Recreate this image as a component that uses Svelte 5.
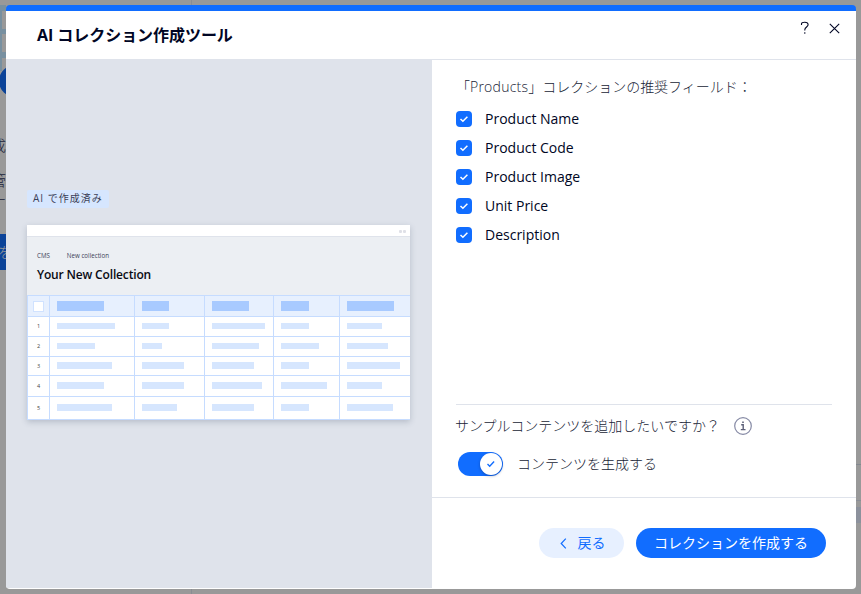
<script>
  let fields = $state([
    { label: 'Product Name', checked: true },
    { label: 'Product Code', checked: true },
    { label: 'Product Image', checked: true },
    { label: 'Unit Price', checked: true },
    { label: 'Description', checked: true }
  ]);
  let generate = $state(true);

  const headBars = [47, 27, 37, 28, 47];
  const rows = [
    [58, 27, 53, 28, 35],
    [38, 20, 47, 38, 41],
    [55, 42, 42, 28, 53],
    [47, 42, 50, 46, 35],
    [55, 35, 42, 28, 46]
  ];
</script>

<div class="page">
  <div class="behind" aria-hidden="true">
    <i class="tile"></i>
    <i class="dot"></i>
    <span class="frag f1">成</span>
    <span class="frag f2">管</span>
    <span class="frag f3">ナ</span>
    <span class="frag f4">を</span>
    <i class="rule top"></i>
    <i class="rule bottom"></i>
    <i class="edge"></i>
  </div>

  <section class="modal">
    <header class="modal-header">
      <h1>AI コレクション作成ツール</h1>
      <div class="actions">
        <button class="icon help" aria-label="ヘルプ">
          <svg width="10" height="14" viewBox="0 0 10 14">
            <path d="M1.5 4V2.8Q1.5 1.2 4.8 1.2T8.1 3.8C8.1 6 4.8 6 4.8 8.7V9.4" />
            <path d="M4.8 11.2v1.5" />
          </svg>
        </button>
        <button class="icon" aria-label="閉じる">
          <svg width="11" height="11" viewBox="0 0 11 11"><path d="M.8.8l9.4 9.4M10.2.8L.8 10.2" /></svg>
        </button>
      </div>
    </header>

    <div class="body">
      <aside class="preview">
        <span class="tag">AI で作成済み</span>
        <div class="card">
          <div class="chrome"><i></i><i></i></div>
          <div class="card-head">
            <p><span>CMS</span><span>New collection</span></p>
            <h2>Your New Collection</h2>
          </div>
          <div class="table">
            <div class="cell head first"><i class="box"></i></div>
            {#each headBars as width}
              <div class="cell head"><i style={`width: ${width}px`}></i></div>
            {/each}
            {#each rows as row, index}
              <div class="cell first">{index + 1}</div>
              {#each row as width}
                <div class="cell"><i style={`width: ${width}px`}></i></div>
              {/each}
            {/each}
          </div>
        </div>
      </aside>

      <div class="form">
        <div class="fields">
          <h3>「<span>Products</span>」コレクションの推奨フィールド：</h3>
          {#each fields as field}
            <label class="field">
              <input type="checkbox" bind:checked={field.checked} />
              <span class="check">
                {#if field.checked}
                  <svg width="16" height="16" viewBox="0 0 16 16"><path d="M4.5 8l2.4 2.3 4.5-4.6" /></svg>
                {/if}
              </span>
              <span class="name">{field.label}</span>
            </label>
          {/each}
        </div>

        <div class="sample">
          <p class="question">
            サンプルコンテンツを追加したいですか？
            <svg width="18" height="18" viewBox="0 0 18 18">
              <circle cx="9" cy="9" r="8.3" />
              <path d="M7.2 7.7h2v4.8M6.8 12.6h4.7" />
              <path class="fill" d="M8.2 4.4h1.6v1.6H8.2z" />
            </svg>
          </p>
          <label class="switch">
            <input type="checkbox" bind:checked={generate} />
            <span class="track" class:on={generate}>
              <span class="knob">
                <svg width="12" height="12" viewBox="0 0 12 12"><path d="M2.5 6l2.2 2.2 4.4-4.6" /></svg>
              </span>
            </span>
            コンテンツを生成する
          </label>
        </div>

        <footer>
          <button class="back">
            <svg width="7" height="11" viewBox="0 0 7 11"><path d="M5.8.7L1.2 5.5l4.6 4.8" /></svg>
            戻る
          </button>
          <button class="create">コレクションを作成する</button>
        </footer>
      </div>
    </div>
  </section>
</div>

<style>
  :global(body) {
    background: #999;
  }

  .page {
    position: relative;
    box-sizing: border-box;
    width: 861px;
    height: 594px;
    padding: 5px 5px 5px 6px;
    overflow: hidden;
    background: #999;
    color: #171c35;
    font-family: 'Open Sans', 'Noto Sans CJK JP', sans-serif;
    font-size: 14px;
  }

  h1, h2, h3, p {
    margin: 0;
  }

  button {
    padding: 0;
    border: 0;
    font: inherit;
    cursor: pointer;
  }

  svg {
    flex: none;
    fill: none;
    stroke: currentColor;
  }

  input {
    position: absolute;
    opacity: 0;
  }

  .behind > * {
    position: absolute;
  }

  .tile {
    top: 5px;
    left: 0;
    width: 6px;
    height: 66px;
    box-sizing: border-box;
    border-left: 2px solid #7890a0;
    background: linear-gradient(#7890a0 6px, #999 6px 24px, #7890a0 24px 29px, #999 29px 47px, #7890a0 47px 53px, #999 53px);
  }

  .dot {
    top: 65px;
    left: -1px;
    width: 32px;
    height: 32px;
    border-radius: 50%;
    background: #0b4399;
  }

  .frag {
    left: -9px;
    width: 15px;
    color: #20243b;
    font-size: 15px;
    font-weight: 300;
    line-height: 20px;
  }

  .f1 { top: 135px; }
  .f2 { top: 170px; }

  .f3 {
    top: 191px;
    left: -9px;
  }

  .f4 {
    top: 234px;
    left: -2px;
    height: 36px;
    background: #0b4399;
    color: #999;
    line-height: 36px;
  }

  .rule {
    left: 191px;
    width: 1px;
    height: 5px;
    background: #898d94;
  }

  .top { top: 0; }
  .bottom { top: 589px; }

  .edge {
    top: 464px;
    left: 856px;
    width: 5px;
    height: 59px;
    background: linear-gradient(#838890 1px, #999 1px 36px, #8a8e96 36px 37px, #999 37px 43px, #8c919c 43px);
  }

  .modal {
    position: relative;
    display: flex;
    flex-direction: column;
    box-sizing: border-box;
    height: 584px;
    border-top: 6px solid #116dff;
    border-radius: 4px;
    overflow: hidden;
    background: #fff;
  }

  .modal-header {
    display: flex;
    align-items: center;
    justify-content: space-between;
    box-sizing: border-box;
    height: 49px;
    padding: 0 16px 0 31px;
    border-bottom: 1px solid #dfe3eb;
    color: #000624;
  }

  h1 {
    font-size: 16px;
    font-weight: 700;
    letter-spacing: -0.05px;
    line-height: 24px;
  }

  .actions {
    display: flex;
    align-items: center;
    gap: 19px;
    margin-top: -13px;
  }

  .icon {
    display: flex;
    background: none;
    color: #000624;
  }

  .icon svg {
    stroke-width: 1.1;
  }

  .help {
    margin-top: -1px;
  }

  .body {
    display: grid;
    flex: 1;
    grid-template-columns: 426px 1fr;
    min-height: 0;
  }

  .preview {
    margin: -1px 0 1px;
    padding: 131px 22px 0 21px;
    background: #dfe3eb;
  }

  .tag {
    display: flex;
    align-items: center;
    box-sizing: border-box;
    width: 82px;
    height: 18px;
    margin-bottom: 17px;
    padding: 0 0 2px 6px;
    border-radius: 2px;
    background: #d6e6fe;
    color: #3b4057;
    font-size: 10px;
    letter-spacing: 1px;
    line-height: 14px;
    white-space: nowrap;
  }

  .card {
    width: 383px;
    background: #eceff3;
    box-shadow: 0 2px 6px rgba(50, 65, 90, 0.24);
  }

  .chrome {
    display: flex;
    align-items: center;
    justify-content: flex-end;
    gap: 1.5px;
    box-sizing: border-box;
    height: 12px;
    padding: 1px 4px 0 0;
    border-bottom: 1px solid #dfe3eb;
    background: #fff;
  }

  .chrome i {
    width: 3px;
    height: 3px;
    border-radius: 1px;
    background: #dfe0e7;
  }

  .card-head {
    box-sizing: border-box;
    height: 58px;
    padding: 14px 10px 0;
  }

  .card-head p {
    display: flex;
    gap: 17px;
    color: #3b4057;
    font-size: 6.2px;
    line-height: 9px;
  }

  h2 {
    margin-top: 6px;
    color: #080a12;
    font-size: 12px;
    font-weight: 600;
    letter-spacing: -0.16px;
    line-height: 17px;
    white-space: nowrap;
  }

  .table {
    display: grid;
    grid-template-columns: 22px 85px 70px 69px 66px 71px;
    grid-template-rows: 21px 20px 20px 19px 21px 23px;
    box-sizing: border-box;
    width: 383px;
    border-right: 1px solid #c6dcff;
    border-bottom: 1px solid #c6dcff;
  }

  .cell {
    display: flex;
    align-items: center;
    min-width: 0;
    padding: 0 0 1px 7px;
    border-top: 1px solid #c6dcff;
    border-left: 1px solid #c6dcff;
    background: #fff;
  }

  .cell i {
    height: 6.5px;
    background: #d6e6fe;
  }

  .head {
    padding-bottom: 0;
    background: #e7f0fe;
  }

  .head i {
    height: 10px;
    background: #a8caff;
  }

  .first {
    justify-content: center;
    padding-left: 0;
    color: #444;
    font-size: 5.5px;
  }

  .head .box {
    width: 9px;
    height: 9px;
    border: 1px solid #d0e2ff;
    background: #fff;
  }

  .form {
    display: flex;
    flex-direction: column;
  }

  .fields {
    box-sizing: border-box;
    height: 345px;
    margin: 0 24px;
    padding-top: 17px;
    border-bottom: 1px solid #dfe3eb;
  }

  h3 {
    font-size: 14px;
    font-weight: 300;
    letter-spacing: -0.02px;
    line-height: 20px;
    white-space: nowrap;
  }

  h3 span {
    letter-spacing: 0.25px;
  }

  .field {
    display: flex;
    align-items: center;
    gap: 13px;
    height: 20px;
    margin-top: 9px;
    color: #000624;
  }

  h3 + .field {
    margin-top: 12px;
  }

  .name {
    line-height: 18px;
  }

  .check {
    width: 16px;
    height: 16px;
    border-radius: 4px;
    background: #116dff;
    color: #fff;
  }

  .check svg {
    display: block;
    stroke-width: 1.5;
  }

  .sample {
    box-sizing: border-box;
    height: 93px;
    padding: 11px 24px 0 23px;
    border-bottom: 1px solid #dfe3eb;
    font-weight: 300;
  }

  .question {
    display: flex;
    align-items: center;
    gap: 14px;
    line-height: 20px;
  }

  .question svg {
    color: #868aa5;
    stroke-width: 1.2;
  }

  .question path {
    stroke: #5b5f77;
    stroke-width: 1.4;
  }

  .question .fill {
    fill: #5b5f77;
    stroke: none;
  }

  .switch {
    display: flex;
    align-items: center;
    gap: 14px;
    margin: 16px 0 0 3px;
    line-height: 24px;
  }

  .track {
    box-sizing: border-box;
    display: flex;
    width: 45px;
    height: 24px;
    padding: 1px;
    border-radius: 12px;
    background: #a8caff;
  }

  .track.on {
    justify-content: flex-end;
    background: #116dff;
  }

  .knob {
    display: grid;
    width: 22px;
    height: 22px;
    place-items: center;
    border-radius: 50%;
    background: #fff;
    box-shadow: 0 1px 3px rgba(0, 6, 36, 0.3);
    color: #116dff;
  }

  .knob svg {
    stroke-width: 1.4;
  }

  footer {
    display: flex;
    justify-content: flex-end;
    gap: 12px;
    padding: 30px 30px 0;
  }

  footer button {
    display: flex;
    align-items: center;
    justify-content: center;
    box-sizing: border-box;
    height: 30px;
    padding-bottom: 2px;
    border-radius: 15px;
    white-space: nowrap;
  }

  .back {
    width: 85px;
    padding-left: 2px;
    gap: 11px;
    background: #e7f0ff;
    color: #116dff;
  }

  .back svg {
    margin-top: 2px;
    stroke-width: 1.2;
  }

  .create {
    width: 190px;
    background: #116dff;
    color: #fff;
  }
</style>
